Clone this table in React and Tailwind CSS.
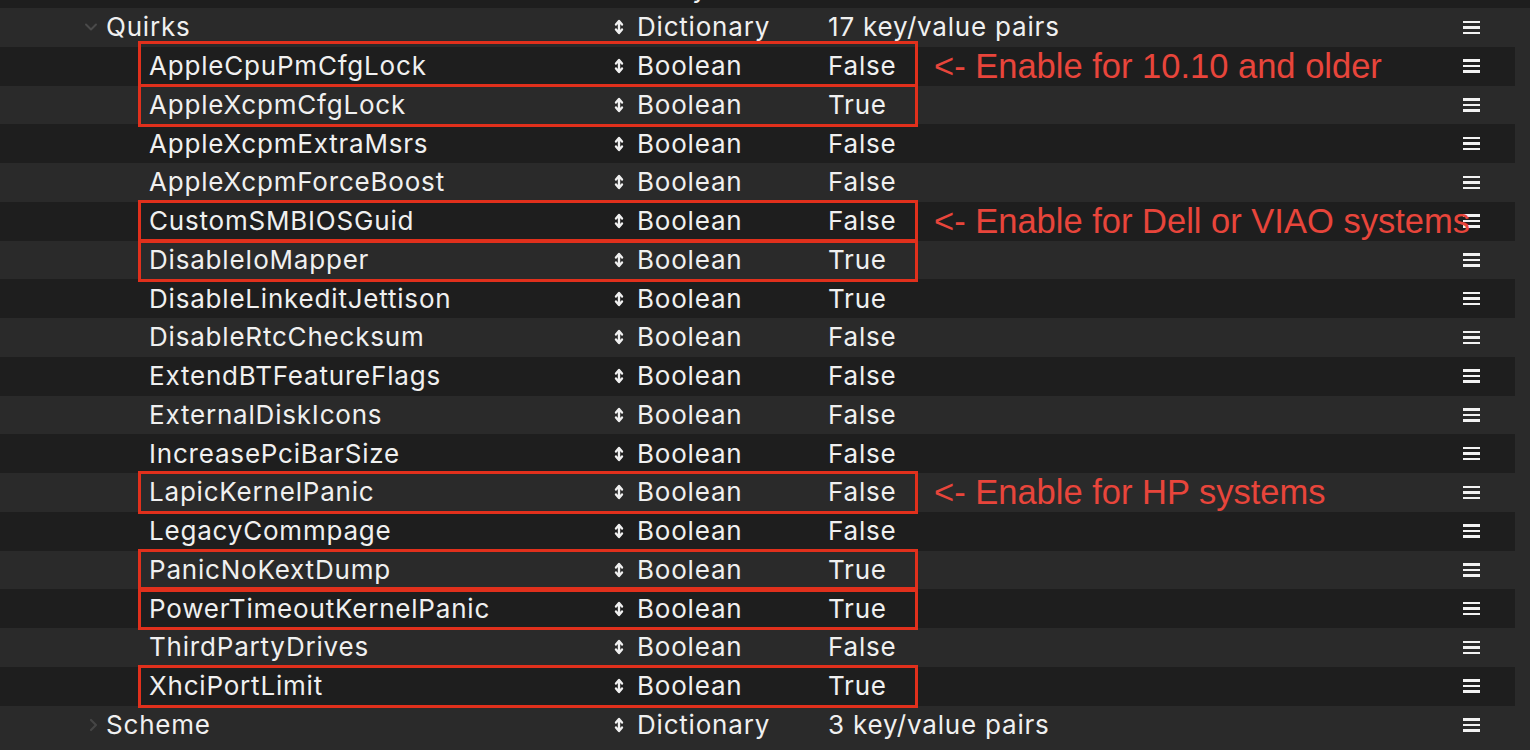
import React from "react";

const rows = [
  { key: "Quirks", type: "Dictionary", value: "17 key/value pairs", level: 1, chevron: "down" },
  { key: "AppleCpuPmCfgLock", type: "Boolean", value: "False", box: "first", note: "<- Enable for 10.10 and older" },
  { key: "AppleXcpmCfgLock", type: "Boolean", value: "True", box: "second" },
  { key: "AppleXcpmExtraMsrs", type: "Boolean", value: "False" },
  { key: "AppleXcpmForceBoost", type: "Boolean", value: "False" },
  { key: "CustomSMBIOSGuid", type: "Boolean", value: "False", box: "normal", note: "<- Enable for Dell or VIAO systems" },
  { key: "DisableIoMapper", type: "Boolean", value: "True", box: "normal" },
  { key: "DisableLinkeditJettison", type: "Boolean", value: "True" },
  { key: "DisableRtcChecksum", type: "Boolean", value: "False" },
  { key: "ExtendBTFeatureFlags", type: "Boolean", value: "False" },
  { key: "ExternalDiskIcons", type: "Boolean", value: "False" },
  { key: "IncreasePciBarSize", type: "Boolean", value: "False" },
  { key: "LapicKernelPanic", type: "Boolean", value: "False", box: "normal", note: "<- Enable for HP systems" },
  { key: "LegacyCommpage", type: "Boolean", value: "False" },
  { key: "PanicNoKextDump", type: "Boolean", value: "True", box: "normal" },
  { key: "PowerTimeoutKernelPanic", type: "Boolean", value: "True", box: "normal" },
  { key: "ThirdPartyDrives", type: "Boolean", value: "False" },
  { key: "XhciPortLimit", type: "Boolean", value: "True", box: "normal" },
  { key: "Scheme", type: "Dictionary", value: "3 key/value pairs", level: 1, chevron: "right" },
];

const UpDown = () => (
  <svg width="10" height="16" viewBox="0 0 10 16" fill="none">
    <path d="M2 5.5 L5 2 L8 5.5" stroke="#f0f0f0" strokeWidth="2.4" strokeLinecap="round" strokeLinejoin="round" />
    <path d="M5 3 V13" stroke="#f0f0f0" strokeWidth="2.4" strokeLinecap="round" />
    <path d="M2 10.5 L5 14 L8 10.5" stroke="#f0f0f0" strokeWidth="2.4" strokeLinecap="round" strokeLinejoin="round" />
  </svg>
);

const Hamburger = () => (
  <div className="flex flex-col gap-[3px] w-[17px]">
    <div className="h-[2.5px] bg-[#f2f2f2]" />
    <div className="h-[2.5px] bg-[#f2f2f2]" />
    <div className="h-[2.5px] bg-[#f2f2f2]" />
  </div>
);

const Chevron = ({ dir }) =>
  dir === "down" ? (
    <svg width="14" height="10" viewBox="0 0 14 10" fill="none">
      <path d="M2 2.5 L7 7.5 L12 2.5" stroke="#4a4a4a" strokeWidth="2" strokeLinecap="round" strokeLinejoin="round" />
    </svg>
  ) : (
    <svg width="10" height="14" viewBox="0 0 10 14" fill="none">
      <path d="M3 2 L8 7 L3 12" stroke="#454545" strokeWidth="2.2" strokeLinecap="round" strokeLinejoin="round" />
    </svg>
  );

const Row = ({ row, dark }) => {
  const boxClass = row.box === "first" ? "top-[-6px] h-[46px]" : "top-[-2px] h-[43px]";
  return (
    <div
      className={`relative flex items-center h-[38.75px] w-[1515px] ${
        dark ? "bg-[#1e1e1e]" : "bg-[#2a2a2a]"
      }`}
    >
      <div className="w-[612px] flex items-center">
        {row.level === 1 ? (
          <div className="flex items-center">
            <div className="w-[106px] flex justify-end pr-[8px]">
              <Chevron dir={row.chevron} />
            </div>
            <span>{row.key}</span>
          </div>
        ) : (
          <span className="pl-[149px]">{row.key}</span>
        )}
      </div>
      <div className="w-[25px] flex items-center pl-[2px]">
        <UpDown />
      </div>
      <div className="w-[191px]">{row.type}</div>
      <div className="flex-1">{row.value}</div>
      <div className="mr-[35px]">
        <Hamburger />
      </div>
      {row.box && (
        <div
          className={`absolute z-10 left-[138px] w-[780px] border-[3px] border-[#e1301c] ${boxClass}`}
        />
      )}
      {row.note && (
        <div className="absolute z-20 left-[934px] top-0 h-full flex items-center font-['Liberation_Sans',Arial,sans-serif] text-[34.5px] tracking-normal text-[#e8453b] whitespace-nowrap">
          {row.note}
        </div>
      )}
    </div>
  );
};

export default function App() {
  return (
    <div className="w-[1530px] h-[750px] overflow-hidden bg-[#2a2a2a] font-['Inter',sans-serif] text-[26px] tracking-[0.8px] text-[#f0f0f0] leading-none">
      <div className="h-[8px] overflow-hidden bg-[#1e1e1e]">
        <div className="flex items-center h-[38.75px] w-[1515px] -mt-[30.75px]">
          <div className="w-[637px]" />
          <div className="w-[191px]">Array</div>
        </div>
      </div>
      {rows.map((row, i) => (
        <Row key={row.key} row={row} dark={i % 2 === 1} />
      ))}
    </div>
  );
}
